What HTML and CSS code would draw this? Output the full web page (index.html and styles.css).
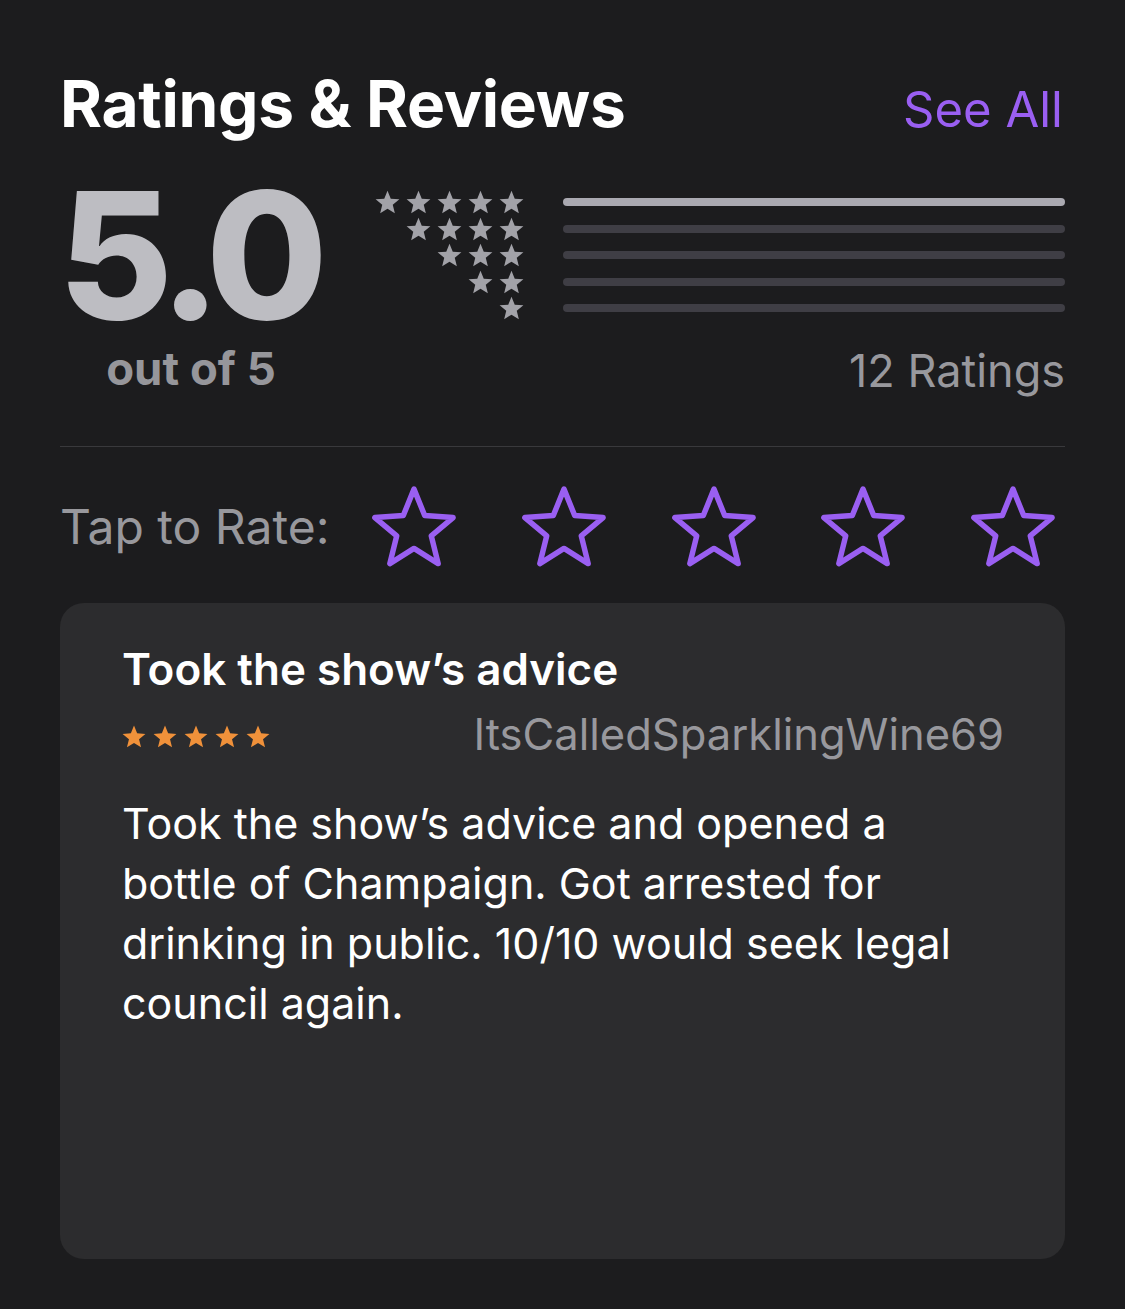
FILE: index.html
```html
<!DOCTYPE html>
<html lang="en">
<head>
	<meta charset="UTF-8">
	<title>Ratings &amp; Reviews</title>
	<link rel="stylesheet" href="styles.css">
</head>
<body>
<svg width="0" height="0" class="defs">
	<symbol id="star" viewBox="0 0 24 23">
		<path d="M12 0.6 L15.12 8.31 L23.41 8.89 L17.04 14.24 L19.05 22.31 L12 17.9 L4.95 22.31 L6.96 14.24 L0.59 8.89 L8.88 8.31 Z"/>
	</symbol>
	<symbol id="star-line" viewBox="-2 -2 28 27">
		<path d="M12 0.6 L15.12 8.31 L23.41 8.89 L17.04 14.24 L19.05 22.31 L12 17.9 L4.95 22.31 L6.96 14.24 L0.59 8.89 L8.88 8.31 Z" fill="none" stroke="currentColor" stroke-width="1.6" stroke-linejoin="round"/>
	</symbol>
</svg>

<div class="page">
	<div class="head">
		<h1>Ratings &amp; Reviews</h1>
		<a href="javascript:;" class="see-all">See All</a>
	</div>

	<div class="summary">
		<div class="score">
			<div class="big">5.0</div>
			<div class="out">out of 5</div>
		</div>
		<div class="hist">
			<div class="row">
				<div class="mini">
					<svg><use href="#star"/></svg><svg><use href="#star"/></svg><svg><use href="#star"/></svg><svg><use href="#star"/></svg><svg><use href="#star"/></svg>
				</div>
				<div class="bar full"></div>
			</div>
			<div class="row">
				<div class="mini">
					<svg><use href="#star"/></svg><svg><use href="#star"/></svg><svg><use href="#star"/></svg><svg><use href="#star"/></svg>
				</div>
				<div class="bar"></div>
			</div>
			<div class="row">
				<div class="mini">
					<svg><use href="#star"/></svg><svg><use href="#star"/></svg><svg><use href="#star"/></svg>
				</div>
				<div class="bar"></div>
			</div>
			<div class="row">
				<div class="mini">
					<svg><use href="#star"/></svg><svg><use href="#star"/></svg>
				</div>
				<div class="bar"></div>
			</div>
			<div class="row">
				<div class="mini">
					<svg><use href="#star"/></svg>
				</div>
				<div class="bar"></div>
			</div>
			<div class="count">12 Ratings</div>
		</div>
	</div>

	<div class="divider"></div>

	<div class="tap">
		<span class="tap-label">Tap to Rate:</span>
		<div class="tap-stars">
			<svg><use href="#star-line"/></svg>
			<svg><use href="#star-line"/></svg>
			<svg><use href="#star-line"/></svg>
			<svg><use href="#star-line"/></svg>
			<svg><use href="#star-line"/></svg>
		</div>
	</div>

	<div class="card">
		<div class="card-title">Took the show’s advice</div>
		<div class="meta">
			<div class="given">
				<svg><use href="#star"/></svg><svg><use href="#star"/></svg><svg><use href="#star"/></svg><svg><use href="#star"/></svg><svg><use href="#star"/></svg>
			</div>
			<span class="author">ItsCalledSparklingWine69</span>
		</div>
		<p class="text">Took the show’s advice and opened a bottle of Champaign. Got arrested for drinking in public. 10/10 would seek legal council again.</p>
	</div>
</div>
</body>
</html>
```

FILE: styles.css
```css
* {
	margin: 0;
	padding: 0;
	box-sizing: border-box;
}
body {
	background: #1c1c1e;
	font-family: Inter, "Liberation Sans", sans-serif;
	color: #fff;
}
.defs {
	position: absolute;
}
.page {
	padding: 68px 60px 50px;
}

/* header */
.head {
	display: flex;
	justify-content: space-between;
	align-items: baseline;
}
.head h1 {
	font-size: 64px;
	font-weight: 700;
	line-height: 72px;
	letter-spacing: -0.3px;
}
.see-all {
	font-size: 49px;
	color: #9a5ff2;
	text-decoration: none;
	padding-right: 2px;
}

/* summary */
.summary {
	display: flex;
	margin-top: 35px;
}
.score {
	width: 270px;
	text-align: center;
	color: #bdbdc2;
}
.big {
	font-size: 176px;
	font-weight: 800;
	line-height: 160px;
	letter-spacing: -10px;
	margin-left: -14px;
}
.out {
	font-size: 45.5px;
	font-weight: 700;
	line-height: 50px;
	color: #96969b;
	margin-top: 9px;
	margin-left: -8px;
}
.hist {
	flex: 1;
	padding-top: 14px;
	padding-left: 44px;
}
.row {
	display: flex;
	align-items: center;
	height: 26.5px;
}
.mini {
	width: 150px;
	display: flex;
	justify-content: flex-end;
	gap: 6px;
	fill: #a2a2a8;
}
.mini svg {
	width: 25px;
	height: 24px;
}
.bar {
	flex: 1;
	height: 8px;
	margin-left: 39px;
	border-radius: 4px;
	background: #3f3e45;
}
.bar.full {
	background: #aaa9b1;
}
.count {
	text-align: right;
	font-size: 45px;
	line-height: 54px;
	color: #98989d;
	margin-top: 22px;
}

.divider {
	height: 1px;
	background: #39393c;
	margin-top: 48px;
}

/* tap to rate */
.tap {
	display: flex;
	align-items: center;
	margin-top: 32px;
}
.tap-label {
	font-size: 48px;
	color: #98989d;
	width: 306px;
}
.tap-stars {
	flex: 1;
	display: flex;
	justify-content: space-between;
	color: #9a5ff2;
	padding-right: 4px;
}
.tap-stars svg {
	width: 96px;
	height: 95px;
}

/* review card */
.card {
	margin-top: 29px;
	height: 656px;
	background: #2c2c2e;
	border-radius: 24px;
	padding: 40px 61px 0 62px;
}
.card-title {
	font-size: 44px;
	font-weight: 600;
	line-height: 52px;
}
.meta {
	display: flex;
	justify-content: space-between;
	align-items: center;
	margin-top: 14px;
}
.given {
	display: flex;
	gap: 7px;
	fill: #f0913a;
	margin-top: 6px;
}
.given svg {
	width: 24px;
	height: 23px;
}
.author {
	font-size: 43.5px;
	color: #98989d;
	line-height: 50px;
}
.text {
	font-size: 43px;
	line-height: 60px;
	margin-top: 34px;
}
```
